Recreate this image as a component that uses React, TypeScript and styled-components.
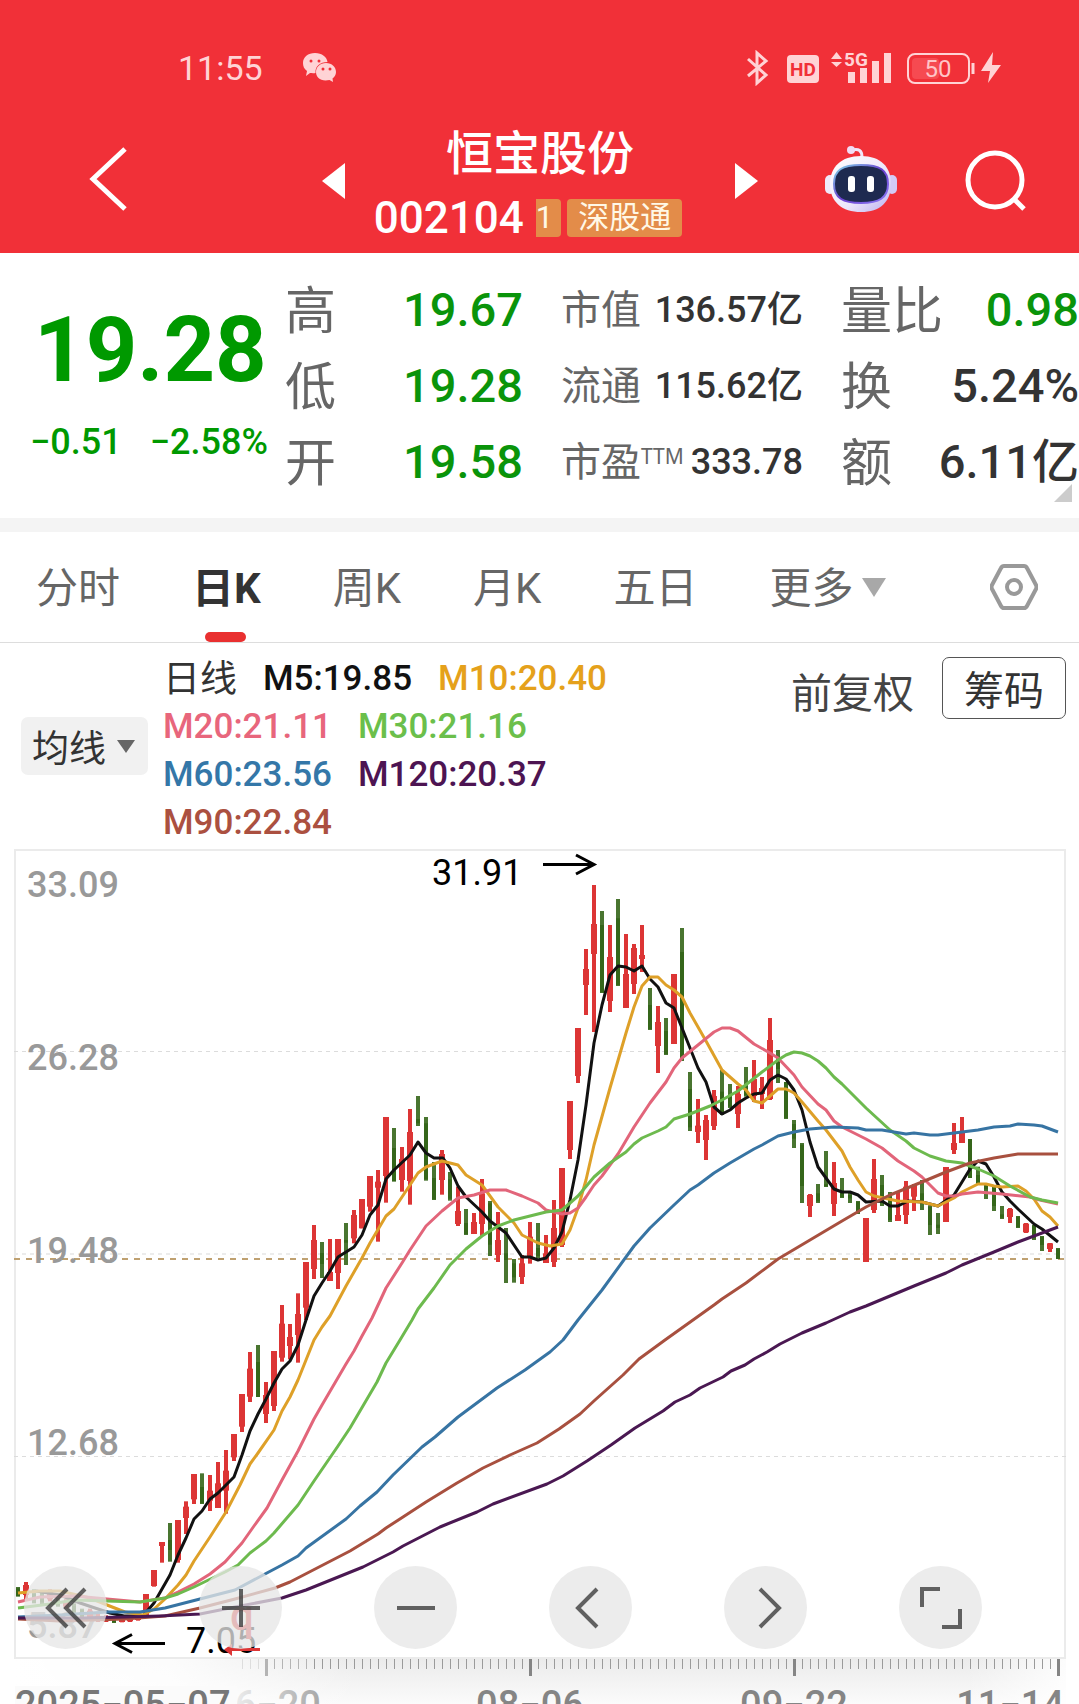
import React from "react";
import styled, { createGlobalStyle, css } from "styled-components";

const CJK = '"Noto Sans CJK SC", sans-serif';
const TEXT = `Roboto, ${CJK}`;

const RED = "#f13038";
const GREEN = "#0a940a";
const INK = "#333333";
const MUTED = "#666666";

const GlobalStyle = createGlobalStyle`
  * { box-sizing: border-box; }
  body { margin: 0; background: #fff; font-family: ${TEXT}; color: ${INK}; }
  button { border: 0; padding: 0; margin: 0; background: none; font: inherit; color: inherit; cursor: pointer; }
  svg { display: block; }
`;

const Page = styled.main`
  width: 100%;
  overflow: hidden;
`;

/* ---------- header ---------- */

const Header = styled.header`
  background: ${RED};
  color: #fff;
  padding-top: 44px;
`;

const StatusBar = styled.div`
  display: flex;
  align-items: center;
  justify-content: space-between;
  height: 48px;
  padding: 0 76px 0 178px;
  color: #ffd3d5;
`;

const StatusGroup = styled.div`
  display: flex;
  align-items: center;
  gap: 40px;
`;

const Clock = styled.time`
  font: 400 34px/48px ${TEXT};
`;

const TitleBar = styled.div`
  display: grid;
  grid-template-columns: 322px 1fr 321px;
  height: 161px;
`;

const BackButton = styled.button`
  justify-self: start;
  margin: 54px 0 0 88px;
  height: 66px;
`;

const StockSwitcher = styled.div`
  display: flex;
  justify-content: space-between;
`;

const ArrowButton = styled.button`
  align-self: flex-start;
  margin-top: 71px;
`;

const StockTitle = styled.div`
  display: flex;
  flex-direction: column;
  align-items: center;
  padding-top: 30px;
`;

const StockName = styled.h1`
  margin: 0;
  font: 500 47px/56px ${CJK};
`;

const CodeRow = styled.div`
  display: flex;
  align-items: center;
  gap: 6px;
  height: 80px;
  padding-right: 24px;
`;

const Code = styled.span`
  margin-right: 6px;
  font: 500 44px/48px ${TEXT};
`;

const Tag = styled.span<{ $cut?: boolean }>`
  padding: 0 11px;
  ${(p) => p.$cut && css`padding: 0 8px 0 0;`}
  border-radius: ${(p) => (p.$cut ? "0 4px 4px 0" : "4px")};
  background: #e38c49;
  color: #fff8e6;
  font: 400 31px/38px ${TEXT};
`;

const HeaderActions = styled.div`
  display: flex;
  justify-content: flex-end;
  align-items: flex-start;
  gap: 67px;
  padding: 53px 52px 0 0;
`;

/* ---------- quote ---------- */

const Quote = styled.section`
  display: grid;
  grid-template-columns: 285px 1fr;
  padding: 19px 0 18px;
  border-bottom: 14px solid #f4f4f4;
  position: relative;
`;

const PriceBlock = styled.div`
  display: flex;
  flex-direction: column;
  gap: 14px;
  padding: 26px 17px 0 30px;
  color: #009900;
`;

const Price = styled.strong`
  padding-left: 4px;
  font: 700 90px/106px ${TEXT};
`;

const Changes = styled.div`
  display: flex;
  justify-content: space-between;
  font: 500 36px/48px ${TEXT};
`;

const FactColumns = styled.div`
  display: flex;
  gap: 38px;
`;

const Facts = styled.dl<{ $fixed?: boolean }>`
  margin: 0;
  flex: ${(p) => (p.$fixed ? "0 0 242px" : "1 1 0")};
`;

const Fact = styled.div<{ $small?: boolean }>`
  display: flex;
  justify-content: space-between;
  height: 76px;
  white-space: nowrap;
  dt { color: ${MUTED}; font: 400 ${(p) => (p.$small ? 40 : 51)}px/70px ${CJK}; }
`;

const FactValue = styled.dd<{ $small?: boolean; $up?: boolean }>`
  margin: 0;
  color: ${(p) => (p.$up ? GREEN : INK)};
  font: 500 ${(p) => (p.$small ? 36 : 47)}px/76px ${TEXT};
`;

const Ttm = styled.sup`
  font: 400 21px/22px "Noto Sans", sans-serif;
  vertical-align: 12px;
`;

const Corner = styled.i`
  position: absolute;
  right: 7px;
  bottom: 16px;
  border-left: 18px solid transparent;
  border-bottom: 18px solid #cccccc;
`;

/* ---------- tabs ---------- */

const Tabs = styled.nav`
  display: flex;
  align-items: center;
  gap: 72px;
  height: 111px;
  padding: 0 41px 0 36px;
  border-bottom: 1px solid #dddddd;
`;

const Tab = styled.button<{ $active?: boolean }>`
  position: relative;
  display: flex;
  align-items: center;
  gap: 9px;
  height: 110px;
  white-space: nowrap;
  color: ${(p) => (p.$active ? INK : MUTED)};
  font: ${(p) => (p.$active ? 700 : 400)} 42px/114px ${TEXT};
  ${(p) =>
    p.$active &&
    css`
      &::after {
        content: "";
        position: absolute;
        left: calc(50% - 21px);
        bottom: 0;
        width: 41px;
        height: 10px;
        border-radius: 5px;
        background: #e93030;
      }
    `}
`;

const TabLabel = styled.span`
  padding-top: 4px;
`;

const Settings = styled.button`
  margin-left: auto;
`;

const Triangle = styled.i<{ $w: number; $h: number; $color: string }>`
  border: solid transparent;
  border-width: ${(p) => p.$h}px ${(p) => p.$w / 2}px 0;
  border-top-color: ${(p) => p.$color};
`;

/* ---------- legend ---------- */

const Legend = styled.section`
  display: flex;
  align-items: flex-start;
  height: 206px;
  padding: 11px 13px 0 21px;
`;

const Picker = styled.button`
  display: flex;
  align-items: center;
  gap: 11px;
  height: 58px;
  margin-top: 63px;
  padding: 0 13px 0 11px;
  border-radius: 7px;
  background: #f1f1f1;
  font: 400 37px/58px ${CJK};
`;

const Averages = styled.ul`
  display: flex;
  flex-wrap: wrap;
  column-gap: 26px;
  flex: 0 1 540px;
  margin: 0 auto 0 15px;
  padding: 0;
  list-style: none;
`;

const Average = styled.li<{ $color: string; $title?: boolean }>`
  color: ${(p) => p.$color};
  font: ${(p) => (p.$title ? "400 37px/52px" : "500 35px/50px")} ${TEXT};
  height: 48px;
`;

const Adjust = styled.button`
  margin: 8px 28px 0 0;
  color: #444444;
  font: 400 41px/56px ${CJK};
`;

const Chips = styled.button`
  margin-top: 3px;
  height: 62px;
  padding: 0 21px;
  border: 1px solid #555555;
  border-radius: 7px;
  font: 400 40px/56px ${CJK};
`;

/* ---------- chart ---------- */

const ChartArea = styled.section`
  position: relative;
  > svg { width: 100%; height: auto; }
`;

const Tools = styled.div`
  position: absolute;
  left: 0;
  right: 0;
  bottom: 55px;
  display: flex;
  justify-content: space-between;
  padding: 0 97px 0 24px;
`;

const Tool = styled.button`
  display: grid;
  place-items: center;
  width: 83px;
  height: 83px;
  border-radius: 50%;
  background: rgba(230, 230, 230, 0.76);
`;

type Candle = [up: 0 | 1, high: number, low: number, open: number, close: number];

/* Each run of bars has its own vertical origin; heights are in thirds of a unit. */
const RUNS: { first: number; origin: number; bars: Candle[] }[] = [
  {
    first: 18,
    origin: 1340,
    bars: [
      [0, 741, 770, 745, 768], [1, 726, 780, 735, 765], [0, 748, 790, 762, 780], [0, 752, 796, 765, 786],
      [1, 748, 784, 756, 778], [0, 760, 800, 768, 795], [1, 778, 806, 785, 800], [0, 790, 822, 798, 815],
      [0, 806, 836, 810, 828], [1, 806, 840, 812, 834], [1, 820, 846, 828, 842], [1, 826, 846, 834, 844],
      [0, 832, 849, 838, 847], [1, 836, 847, 840, 846], [1, 834, 846, 838, 844], [1, 826, 842, 832, 840],
      [1, 762, 830, 762, 830], [1, 690, 740, 690, 738], [1, 606, 668, 606, 618], [0, 549, 665, 600, 630],
      [1, 540, 668, 540, 660], [1, 484, 582, 500, 534], [1, 402, 492, 402, 478], [0, 400, 492, 441, 490],
      [1, 405, 513, 452, 482], [1, 366, 504, 430, 504], [1, 330, 521, 392, 452], [1, 282, 363, 282, 352],
      [1, 162, 276, 162, 260], [1, 36, 186, 86, 170], [0, 15, 171, 66, 171], [1, 126, 249, 165, 222],
      [1, 33, 213, 33, 198],
    ],
  },
  {
    first: 282,
    origin: 1000,
    bars: [
      [1, 915, 1085, 971, 1073], [1, 972, 1078, 1011, 1038], [1, 880, 1088, 942, 1005], [1, 786, 960, 786, 923],
      [1, 675, 837, 720, 807], [0, 726, 834, 759, 792], [1, 717, 843, 816, 843], [1, 717, 867, 717, 819],
      [0, 669, 795, 720, 728],
    ],
  },
  {
    first: 354,
    origin: 840,
    bars: [
      [1, 1110, 1210, 1125, 1195], [1, 1077, 1165, 1077, 1165], [1, 1008, 1115, 1008, 1100], [1, 990, 1205, 1025, 1043],
      [1, 831, 1088, 831, 1008], [0, 864, 1025, 924, 1023], [1, 921, 1055, 957, 1020], [1, 807, 1094, 876, 1023],
      [0, 768, 858, 837, 850], [0, 831, 1022, 850, 1018], [0, 966, 1080, 1014, 1078], [1, 930, 1064, 942, 1020],
      [0, 996, 1082, 1018, 1076], [1, 1040, 1158, 1113, 1152], [0, 1107, 1185, 1149, 1182], [1, 1119, 1182, 1146, 1182],
      [1, 1017, 1188, 1060, 1152], [0, 1083, 1248, 1090, 1214], [1, 1116, 1266, 1200, 1245], [0, 1164, 1329, 1240, 1260],
      [0, 1257, 1328, 1270, 1312], [1, 1245, 1332, 1270, 1311], [1, 1146, 1271, 1190, 1250], [0, 1149, 1255, 1224, 1248],
      [1, 1185, 1269, 1240, 1269], [1, 1080, 1281, 1164, 1266], [1, 984, 1221, 984, 1215], [1, 783, 957, 783, 930],
      [1, 564, 729, 564, 708], [1, 327, 525, 387, 435], [1, 135, 576, 252, 342], [0, 213, 459, 255, 457],
      [1, 255, 516, 351, 483], [0, 177, 438, 235, 435], [1, 282, 504, 402, 504], [1, 312, 462, 324, 432],
      [1, 255, 396, 345, 357], [0, 444, 570, 495, 567], [1, 498, 699, 546, 618], [0, 534, 645, 573, 642],
      [1, 402, 612, 402, 612], [0, 264, 663, 336, 657], [0, 696, 873, 747, 862], [1, 777, 909, 857, 876],
    ],
  },
  {
    first: 706,
    origin: 980,
    bars: [
      [1, 405, 540, 420, 480], [1, 330, 450, 348, 438], [0, 270, 405, 335, 402], [0, 312, 384, 350, 380],
      [1, 318, 444, 342, 402], [0, 261, 350, 318, 346], [1, 240, 366, 297, 348], [1, 291, 387, 324, 342],
      [1, 114, 360, 180, 357], [0, 210, 309, 240, 267], [0, 306, 417, 306, 414], [0, 420, 504, 432, 476],
      [0, 489, 669, 494, 618], [1, 642, 711, 645, 678], [0, 612, 669, 640, 664], [0, 513, 621, 613, 618],
      [1, 546, 708, 609, 672], [0, 594, 654, 633, 652], [0, 636, 669, 645, 655], [0, 663, 702, 665, 700],
      [1, 714, 846, 714, 846], [1, 537, 699, 597, 690], [0, 585, 678, 615, 670], [0, 636, 726, 650, 720],
      [1, 636, 723, 705, 723], [1, 603, 732, 620, 705], [1, 612, 693, 615, 650], [0, 600, 690, 640, 660],
      [0, 676, 765, 680, 735], [0, 699, 762, 734, 744], [1, 561, 726, 561, 726], [1, 429, 522, 489, 510],
      [1, 411, 489, 459, 489], [0, 477, 594, 477, 594], [0, 560, 612, 585, 610], [0, 610, 657, 617, 628],
      [0, 618, 693, 622, 678], [0, 678, 717, 703, 713], [1, 684, 729, 687, 711], [0, 708, 744, 710, 742],
      [1, 729, 759, 731, 757], [0, 735, 780, 737, 775], [0, 768, 813, 770, 795], [1, 789, 816, 790, 807],
      [0, 804, 837, 806, 837],
    ],
  },
];

const LINES: { name: string; color: string; points: string }[] = [
  {
    name: "M5",
    color: "#111111",
    points:
      "36,1591 60,1595 80,1603 110,1613 124,1616 143,1616 154,1603 170,1575 178,1555 186,1538 194,1519 202,1511 210,1499 218,1493 234,1477 242,1455 250,1431 258,1414 266,1399 274,1383 282,1369 290,1361 298,1345 306,1320 314,1296 322,1283 330,1271 338,1257 346,1252 354,1247 362,1235 370,1215 378,1205 386,1179 394,1170 410,1155 418,1142 426,1153 434,1158 443,1158 450,1168 458,1186 466,1197 482,1212 490,1221 498,1227 506,1233 522,1257 530,1257 538,1260 546,1258 554,1248 562,1232 570,1200 578,1160 586,1105 594,1043 602,1005 610,975 618,966 626,967 634,971 642,966 650,979 658,987 666,1003 674,1008 682,1028 690,1048 698,1068 706,1082 714,1107 722,1114 730,1110 738,1103 746,1098 754,1094 762,1093 770,1080 778,1075 786,1079 794,1090 802,1110 810,1142 818,1167 834,1189 842,1192 850,1192 858,1195 866,1202 882,1201 890,1206 898,1206 908,1201 922,1202 938,1206 954,1195 962,1182 970,1169 978,1161 986,1164 994,1177 1002,1192 1010,1201 1018,1209 1034,1224 1042,1229 1058,1242",
  },
  {
    name: "M10",
    color: "#dea028",
    points:
      "18,1593 40,1591 60,1591 90,1598 107,1605 125,1612 143,1615 154,1609 165,1599 178,1585 186,1575 194,1561 210,1537 226,1512 240,1485 250,1464 258,1453 274,1430 282,1411 290,1397 298,1380 306,1360 314,1340 322,1327 330,1316 346,1286 362,1258 370,1243 386,1216 394,1209 410,1185 418,1173 426,1167 442,1161 458,1165 466,1175 482,1185 498,1207 514,1223 522,1235 538,1243 550,1246 562,1244 570,1230 578,1208 586,1180 594,1145 610,1088 626,1033 634,1007 642,986 650,977 658,977 666,985 674,990 682,997 690,1013 706,1041 722,1070 738,1084 746,1090 754,1101 762,1103 770,1096 778,1089 786,1089 794,1093 802,1102 818,1121 826,1130 842,1151 850,1167 858,1180 866,1192 874,1196 898,1201 922,1202 938,1206 954,1198 962,1192 978,1184 986,1184 994,1186 1002,1187 1018,1186 1026,1191 1034,1199 1042,1211 1050,1217 1058,1226",
  },
  {
    name: "M20",
    color: "#e2657a",
    points:
      "18,1602 40,1597 75,1596 107,1599 140,1602 165,1598 178,1592 194,1584 210,1574 225,1562 242,1543 254,1526 267,1508 282,1480 298,1451 314,1419 322,1405 346,1364 354,1351 362,1336 372,1318 386,1288 402,1263 410,1250 426,1226 442,1211 458,1198 474,1195 490,1190 506,1190 522,1196 538,1203 546,1210 562,1214 570,1213 578,1208 586,1197 594,1185 602,1176 618,1154 634,1127 650,1103 666,1082 674,1068 682,1058 698,1045 714,1032 722,1028 730,1028 738,1031 754,1044 770,1053 778,1058 794,1075 802,1087 818,1104 826,1110 834,1121 842,1127 866,1139 882,1148 898,1161 914,1171 922,1177 930,1185 938,1193 946,1196 954,1196 962,1194 978,1192 1002,1194 1030,1197 1040,1200 1058,1204",
  },
  {
    name: "M30",
    color: "#6dba4e",
    points:
      "18,1608 50,1604 75,1600 107,1601 140,1602 165,1598 178,1594 194,1587 225,1572 238,1565 250,1553 266,1541 274,1533 298,1505 314,1481 338,1446 350,1428 377,1382 386,1363 400,1340 412,1320 418,1309 434,1288 450,1265 466,1249 482,1236 498,1226 514,1220 530,1216 546,1212 562,1210 570,1203 578,1196 594,1177 610,1163 626,1152 634,1144 642,1138 658,1131 666,1127 674,1119 690,1114 710,1106 722,1100 738,1091 762,1072 778,1060 786,1055 794,1052 802,1053 810,1056 818,1061 826,1068 834,1077 842,1084 866,1108 890,1130 906,1141 914,1148 930,1156 946,1161 962,1163 978,1169 994,1176 1010,1186 1030,1197 1042,1200 1058,1203",
  },
  {
    name: "M60",
    color: "#3774a3",
    points:
      "18,1617 60,1615 107,1612 140,1612 165,1608 200,1599 235,1590 265,1574 282,1565 298,1556 306,1548 346,1519 360,1506 377,1492 393,1475 422,1447 435,1437 458,1417 497,1388 525,1370 550,1352 563,1340 578,1320 594,1300 602,1290 634,1246 650,1228 674,1205 690,1190 698,1185 714,1173 730,1163 754,1149 762,1145 778,1136 794,1132 810,1129 834,1127 858,1128 866,1130 882,1130 906,1134 914,1133 930,1135 938,1135 962,1132 978,1130 994,1127 1010,1126 1018,1124 1034,1125 1042,1126 1050,1129 1058,1132",
  },
  {
    name: "M90",
    color: "#a8503f",
    points:
      "18,1619 60,1621 125,1619 165,1616 200,1608 235,1599 275,1588 290,1582 350,1551 378,1534 386,1528 403,1517 426,1502 457,1483 483,1468 510,1455 537,1443 559,1429 580,1414 595,1400 623,1375 639,1359 665,1340 700,1315 714,1305 722,1299 746,1283 778,1259 810,1240 842,1221 866,1207 890,1195 922,1182 946,1172 970,1163 994,1158 1018,1154 1058,1154",
  },
  {
    name: "M120",
    color: "#4a1852",
    points:
      "18,1618 80,1618 125,1617 160,1616 200,1614 235,1607 282,1598 306,1590 363,1567 393,1552 403,1546 440,1527 477,1512 493,1504 547,1484 563,1476 587,1461 611,1445 635,1428 663,1411 675,1402 690,1395 700,1388 723,1377 731,1371 745,1365 754,1359 767,1352 780,1344 802,1333 826,1323 850,1312 866,1306 890,1296 914,1286 946,1273 962,1265 994,1252 1018,1242 1042,1233 1058,1227",
  },
];

const AXIS = [
  { label: "33.09", y: 897 },
  { label: "26.28", y: 1070 },
  { label: "19.48", y: 1263 },
  { label: "12.68", y: 1455 },
  { label: "5.87", y: 1638 },
];

const DATES = [
  { label: "08−06", x: 530, anchor: "middle" as const },
  { label: "09−22", x: 794, anchor: "middle" as const },
  { label: "11−14", x: 1064, anchor: "end" as const },
];

function Chart() {
  return (
    <svg viewBox="0 849 1079 855" role="img" aria-label="日K">
      <defs>
        <linearGradient id="axisBg" x1="0" y1="0" x2="0" y2="1">
          <stop offset="0" stopColor="#ebebeb" />
          <stop offset="1" stopColor="#fbfbfb" />
        </linearGradient>
        <linearGradient id="axisLeft" x1="0" y1="0" x2="1" y2="0">
          <stop offset="0" stopColor="#fff" />
          <stop offset="0.45" stopColor="#fff" stopOpacity="0.85" />
          <stop offset="1" stopColor="#fff" stopOpacity="0" />
        </linearGradient>
        <linearGradient id="axisRight" x1="0" y1="0" x2="1" y2="0">
          <stop offset="0" stopColor="#fff" stopOpacity="0" />
          <stop offset="1" stopColor="#fff" stopOpacity="0.85" />
        </linearGradient>
        <linearGradient id="dateFade" x1="225" x2="330" y1="0" y2="0" gradientUnits="userSpaceOnUse">
          <stop offset="0" stopColor="#f4f4f4" />
          <stop offset="1" stopColor="#a0a0a0" />
        </linearGradient>
      </defs>

      <rect x="15" y="1659" width="1051" height="45" fill="url(#axisBg)" />
      <rect x="15" y="1659" width="345" height="45" fill="url(#axisLeft)" />
      <rect x="966" y="1659" width="100" height="45" fill="url(#axisRight)" />

      <rect x="15" y="850" width="1050" height="808" fill="none" stroke="#ebebeb" strokeWidth="2" />
      <g stroke="#dcdcdc" strokeDasharray="4 4">
        <line x1="14" x2="1066" y1="1051.5" y2="1051.5" />
        <line x1="14" x2="1066" y1="1254" y2="1254" stroke="#ececec" strokeWidth="2" />
        <line x1="14" x2="1066" y1="1456.5" y2="1456.5" />
      </g>
      <line x1="14" x2="1064" y1="1259" y2="1259" stroke="#bfa171" strokeWidth="2" strokeDasharray="6 6" />

      <g fill="#999999" fontSize="36" fontWeight="500" fontFamily={TEXT}>
        {AXIS.map((a) => (
          <text key={a.label} x="27" y={a.y}>
            {a.label}
          </text>
        ))}
      </g>

      {RUNS.map((run) =>
        run.bars.map(([up, high, low, top, bottom], i) => {
          const x = run.first + i * 8;
          const y = (v: number) => run.origin + v / 3;
          const half = up ? 3 : 2;
          return (
            <g key={x} fill={up ? "#dc3535" : "#35661a"}>
              <rect x={x - 2} y={y(high)} width="4" height={(low - high) / 3} opacity={up ? 1 : 0.9} />
              <rect x={x - half} y={y(top)} width={half * 2} height={Math.max(2, (bottom - top) / 3)} />
            </g>
          );
        }),
      )}

      {LINES.map((l) => (
        <polyline key={l.name} points={l.points} fill="none" stroke={l.color} strokeWidth="3" strokeLinejoin="round" />
      ))}

      <g fill="none" stroke="#000" strokeWidth="3">
        <path d="M543 864.500H593M576 855L594 864.500L576 874" />
        <path d="M165 1643.500H115M132 1634.500L115 1643.500L132 1652.500" />
      </g>
      <g fill="#000" fontSize="36" fontFamily={TEXT}>
        <text x="432" y="885">31.91</text>
        <text x="186" y="1653">7.05</text>
      </g>
      <text x="230" y="1630" fontSize="42" fontWeight="500" fill="#dc3535" fontFamily={TEXT}>
        q
      </text>
      <path d="M260 1649.500H228" stroke="#dc3535" strokeWidth="3" />
      <path d="M224 1649.500L232 1644V1656Z" fill="#dc3535" />

      {Array.from({ length: 103 }, (_, i) => {
        const x = 242 + i * 8;
        const major = (i - 3) % 33 === 0;
        const ink = x < 310 ? (x < 260 ? "#dddddd" : "#b4b4b4") : major ? "#858585" : "#9a9a9a";
        return <rect key={x} x={major ? x - 1 : x} y="1659" width={major ? 3 : 1} height={major ? 17 : 10} fill={ink} />;
      })}

      <g fontSize="38" fontWeight="500" fontFamily={TEXT} fill="#858585">
        <text x="267" y="1718" textAnchor="middle" fill="url(#dateFade)">
          06−20
        </text>
        <rect x="15" y="1686" width="222" height="18" fill="#fbfbfb" />
        <text x="15" y="1718" fill="#777777">
          2025−05−07
        </text>
        {DATES.map((d) => (
          <text key={d.label} x={d.x} y="1718" textAnchor={d.anchor}>
            {d.label}
          </text>
        ))}
      </g>
    </svg>
  );
}

const TOOLS: { label: string; d: string }[] = [
  { label: "快退", d: "M22 2L3 21L22 40M40 2L21 21L40 40" },
  { label: "放大", d: "M21 2V40M2 21H40" },
  { label: "缩小", d: "M2 21H40" },
  { label: "左移", d: "M27 2L8 21L27 40" },
  { label: "右移", d: "M15 2L34 21L15 40" },
  { label: "全屏", d: "M2 20V2H20M22 40H40V22" },
];

function Robot() {
  return (
    <svg width="74" height="68" viewBox="0 0 74 68">
      <defs>
        <linearGradient id="shell" x1="0" y1="0" x2="1" y2="1">
          <stop offset="0" stopColor="#ffffff" />
          <stop offset="0.6" stopColor="#ece6fa" />
          <stop offset="1" stopColor="#b9aef0" />
        </linearGradient>
        <linearGradient id="rim" x1="0" y1="0" x2="1" y2="1">
          <stop offset="0" stopColor="#7fd9e8" />
          <stop offset="0.5" stopColor="#6a3fd0" />
          <stop offset="1" stopColor="#8b7bf5" />
        </linearGradient>
      </defs>
      <path d="M28 5C35 3 38 6 38 12" fill="none" stroke="#f1e6fa" strokeWidth="3" />
      <circle cx="27" cy="5" r="4" fill="#f1dcf4" />
      <rect x="1" y="30" width="10" height="19" rx="5" fill="#efeafa" />
      <rect x="63" y="30" width="10" height="19" rx="5" fill="#d3caf6" />
      <path d="M37 11C57 11 67 22 67 39C67 57 56 67 37 67C18 67 6 57 6 39C6 22 17 11 37 11Z" fill="url(#shell)" />
      <path d="M37 20C56 20 64 25 64 39C64 53 55 58 37 58C19 58 10 53 10 39C10 25 18 20 37 20Z" fill="#1e2a50" stroke="url(#rim)" strokeWidth="2" />
      <rect x="24" y="31" width="7" height="16" rx="3" fill="#fff" />
      <rect x="43" y="31" width="7" height="16" rx="3" fill="#fff" />
    </svg>
  );
}

function StatusIcons() {
  return (
    <svg width="256" height="36" viewBox="0 0 256 36" fill="none" stroke="#ffd3d5">
      <path d="M1 9L19 25L10 33V3L19 11L1 26" strokeWidth="3" />
      <rect x="40" y="5" width="32" height="28" rx="4" fill="#ffd3d5" stroke="none" />
      <text x="56" y="26" textAnchor="middle" fontSize="19" fontWeight="700" fontFamily={TEXT} fill={RED} stroke="none">
        HD
      </text>
      <path d="M84 9L89.500 2L95 9ZM84 12H95L89.500 17Z" fill="#ffd3d5" stroke="none" />
      <text x="97" y="16" fontSize="19" fontWeight="700" fontFamily={TEXT} fill="#ffd3d5" stroke="none">
        5G
      </text>
      <path d="M101 22H108V33H101ZM113 18H120V33H113ZM125 11H132V33H125ZM137 3H144V33H137Z" fill="#ffd3d5" stroke="none" />
      <rect x="161" y="4" width="61" height="29" rx="7" strokeWidth="2" />
      <rect x="165" y="8" width="27" height="21" rx="4" fill="#f64a51" stroke="none" />
      <path d="M226 13V24" strokeWidth="3" />
      <text x="191" y="27" textAnchor="middle" fontSize="24" fontFamily={TEXT} fill="#ffc4c7" stroke="none">
        50
      </text>
      <path d="M246 2L234 21H243L241 33L254 15H245Z" fill="#ffd3d5" stroke="none" />
    </svg>
  );
}

function WeChat() {
  return (
    <svg width="34" height="30" viewBox="0 0 34 30" fill="#ffd3d5">
      <path d="M12 0C19 0 24 4 24.500 9C17 9 12 13 12.500 20C10 20.500 8 20 7 20L3 23L4 18C1 16 0 13 0 10C0 4 5 0 12 0Z" />
      <path d="M23 10C29 10 33 14 33 19C33 22 31.500 24 29.500 25.500L30 29L26.500 27C18 29 13 24.500 13 19C13 14 17 10 23 10Z" />
      <g fill={RED}>
        <circle cx="8" cy="8" r="1.500" />
        <circle cx="16" cy="8" r="1.500" />
        <circle cx="20" cy="16" r="1.500" />
        <circle cx="27" cy="16" r="1.500" />
      </g>
    </svg>
  );
}

const AVERAGES = [
  { text: "日线", color: INK, title: true },
  { text: "M5:19.85", color: "#111111" },
  { text: "M10:20.40", color: "#e5a11b" },
  { text: "M20:21.11", color: "#e8667c" },
  { text: "M30:21.16", color: "#6bbf4b" },
  { text: "M60:23.56", color: "#3477a8" },
  { text: "M120:20.37", color: "#4d1452" },
  { text: "M90:22.84", color: "#ab5040" },
];

export default function App() {
  return (
    <Page>
      <GlobalStyle />
      <Header>
        <StatusBar>
          <StatusGroup>
            <Clock>11:55</Clock>
            <WeChat />
          </StatusGroup>
          <StatusIcons />
        </StatusBar>
        <TitleBar>
          <BackButton aria-label="返回">
            <svg width="40" height="66" viewBox="0 0 40 66" fill="none" stroke="#fff" strokeWidth="5">
              <path d="M37 3L5 33L37 63" />
            </svg>
          </BackButton>
          <StockSwitcher>
            <ArrowButton aria-label="上一只">
              <svg width="23" height="36" viewBox="0 0 23 36" fill="#fff"><path d="M23 0V36L0 18Z" /></svg>
            </ArrowButton>
            <StockTitle>
              <StockName>恒宝股份</StockName>
              <CodeRow>
                <Code>002104</Code>
                <Tag $cut>1</Tag>
                <Tag>深股通</Tag>
              </CodeRow>
            </StockTitle>
            <ArrowButton aria-label="下一只">
              <svg width="23" height="36" viewBox="0 0 23 36" fill="#fff"><path d="M0 0V36L23 18Z" /></svg>
            </ArrowButton>
          </StockSwitcher>
          <HeaderActions>
            <button aria-label="助手"><Robot /></button>
            <button aria-label="搜索">
              <svg width="62" height="66" viewBox="0 0 62 66" fill="none" stroke="#fff" strokeWidth="5">
                <circle cx="30" cy="35" r="27" />
                <path d="M49 54L59 64" />
              </svg>
            </button>
          </HeaderActions>
        </TitleBar>
      </Header>

      <Quote>
        <PriceBlock>
          <Price>19.28</Price>
          <Changes>
            <span>−0.51</span>
            <span>−2.58%</span>
          </Changes>
        </PriceBlock>
        <FactColumns>
          <Facts>
            <Fact><dt>高</dt><FactValue $up>19.67</FactValue></Fact>
            <Fact><dt>低</dt><FactValue $up>19.28</FactValue></Fact>
            <Fact><dt>开</dt><FactValue $up>19.58</FactValue></Fact>
          </Facts>
          <Facts $fixed>
            <Fact $small><dt>市值</dt><FactValue $small>136.57亿</FactValue></Fact>
            <Fact $small><dt>流通</dt><FactValue $small>115.62亿</FactValue></Fact>
            <Fact $small><dt>市盈<Ttm>TTM</Ttm></dt><FactValue $small>333.78</FactValue></Fact>
          </Facts>
          <Facts>
            <Fact><dt>量比</dt><FactValue $up>0.98</FactValue></Fact>
            <Fact><dt>换</dt><FactValue>5.24%</FactValue></Fact>
            <Fact><dt>额</dt><FactValue>6.11亿</FactValue></Fact>
          </Facts>
        </FactColumns>
        <Corner />
      </Quote>

      <Tabs>
        <Tab><TabLabel>分时</TabLabel></Tab>
        <Tab $active><TabLabel>日K</TabLabel></Tab>
        <Tab><TabLabel>周K</TabLabel></Tab>
        <Tab><TabLabel>月K</TabLabel></Tab>
        <Tab><TabLabel>五日</TabLabel></Tab>
        <Tab><TabLabel>更多</TabLabel><Triangle $w={24} $h={19} $color="#a8a8a8" /></Tab>
        <Settings aria-label="设置">
          <svg width="48" height="48" viewBox="0 0 48 48" fill="none" stroke="#999999" strokeWidth="4">
            <path d="M14 3H34Q36 3 37 5L46 22Q47 24 46 26L37 43Q36 45 34 45H14Q12 45 11 43L2 26Q1 24 2 22L11 5Q12 3 14 3Z" />
            <circle cx="24" cy="24" r="7" />
          </svg>
        </Settings>
      </Tabs>

      <Legend>
        <Picker>均线<Triangle $w={18} $h={13} $color="#666666" /></Picker>
        <Averages>
          {AVERAGES.map((a) => (
            <Average key={a.text} $color={a.color} $title={a.title}>{a.text}</Average>
          ))}
        </Averages>
        <Adjust>前复权</Adjust>
        <Chips>筹码</Chips>
      </Legend>

      <ChartArea>
        <Chart />
        <Tools>
          {TOOLS.map((t) => (
            <Tool key={t.label} aria-label={t.label}>
              <svg width="42" height="42" viewBox="0 0 42 42" fill="none" stroke="#333333" strokeOpacity="0.76" strokeWidth="4">
                <path d={t.d} />
              </svg>
            </Tool>
          ))}
        </Tools>
      </ChartArea>
    </Page>
  );
}
